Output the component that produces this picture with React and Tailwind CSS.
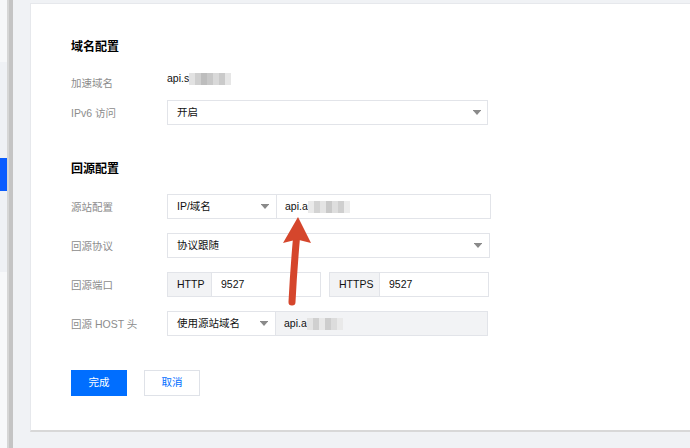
import React from "react";

const font = {
  fontFamily: '"Liberation Sans", "Noto Sans CJK SC", sans-serif',
};

function Caret() {
  return (
    <svg width="8" height="5" viewBox="0 0 8 5" className="shrink-0">
      <rect x="0" y="0" width="8" height="1" fill="#8a8a8a" />
      <polygon points="0.5,1 7.5,1 4,5" fill="#8a8a8a" />
    </svg>
  );
}

// pixelated masked text tail
function Mosaic({ shades }) {
  return (
    <span className="inline-flex h-[12px] blur-[0.6px]">
      {shades.map((c, i) => (
        <span key={i} className="w-[6px] h-full" style={{ backgroundColor: c }} />
      ))}
    </span>
  );
}

function Label({ children }) {
  return (
    <div className="w-[96px] shrink-0 text-[10.5px] leading-[14px] text-[#8c8c8c]">
      {children}
    </div>
  );
}

function Row({ label, children, className = "" }) {
  return (
    <div className={"flex items-center h-[25px] " + className}>
      <Label>{label}</Label>
      {children}
    </div>
  );
}

export default function App() {
  return (
    <div
      className="relative w-[690px] h-[448px] flex bg-[#f0f2f5] overflow-hidden text-[#111]"
      style={font}
    >
      {/* side nav sliver */}
      <div className="w-[7px] flex flex-col shrink-0">
        <div className="h-[62px] bg-[#f6f7f9]" />
        <div className="h-[96px] bg-[#eff1f5]" />
        <div className="h-[33px] bg-[#0a5cff]" />
        <div className="h-[81px] bg-[#eff1f5]" />
        <div className="flex-1 bg-[#f7f8fa]" />
      </div>
      {/* scrollbar */}
      <div className="w-[6px] shrink-0 bg-[#c4c4c4] border-l-2 border-[#d6d6d6]" />

      <div className="flex-1 pl-[17px] pt-[3px] overflow-hidden">
        <div className="w-[700px] h-[429px] bg-white border border-[#e6e8ec] border-b-2 border-b-[#d8d8d8] pl-[40px] pt-[35px] flex flex-col">
          <div className="text-[12px] leading-[16px] font-bold text-black">域名配置</div>

          <div className="flex items-start h-[24px] mt-[16px]">
            <div className="w-[96px] shrink-0 text-[10.5px] leading-[14px] text-[#8c8c8c] pt-[5px]">加速域名</div>
            <div className="flex items-center h-[16px] text-[10.5px] text-[#111]">
              <span>api.s</span>
              <Mosaic shades={["#e2e2e2", "#cfcfcf", "#bdbdbd", "#c8c8c8", "#d9d9d9", "#cacaca", "#e6e6e6"]} />
            </div>
          </div>

          <Row label="IPv6 访问" className="mt-[5px] h-[24px]">
            <div className="w-[321px] h-full border border-[#e2e4e9] flex items-center justify-between pl-[9px] pr-[6px] text-[10.5px]">
              <span>开启</span>
              <Caret />
            </div>
          </Row>

          <div className="mt-[36px] text-[12px] leading-[16px] font-bold text-black">回源配置</div>

          <Row label="源站配置" className="mt-[17px]">
            <div className="w-[110px] h-full border border-[#e2e4e9] flex items-center justify-between pl-[9px] pr-[7px] text-[10.5px]">
              <span>IP/域名</span>
              <Caret />
            </div>
            <div className="w-[214px] h-full border border-l-0 border-[#e2e4e9] flex items-center pl-[8px] text-[10.5px]">
              <span>api.a</span>
              <Mosaic shades={["#eaeaea", "#d3d3d3", "#e4e4e4", "#c9c9c9", "#dedede", "#cfcfcf", "#ececec"]} />
            </div>
          </Row>

          <Row label="回源协议" className="mt-[14px]">
            <div className="w-[323px] h-full border border-[#e2e4e9] flex items-center justify-between pl-[9px] pr-[7px] text-[10.5px]">
              <span>协议跟随</span>
              <Caret />
            </div>
          </Row>

          <Row label="回源端口" className="mt-[14px]">
            <div className="w-[45px] h-full border border-[#e2e4e9] bg-[#f2f3f5] flex items-center pl-[9px] text-[10.5px]">
              HTTP
            </div>
            <div className="w-[109px] h-full border border-l-0 border-[#e2e4e9] flex items-center pl-[9px] text-[10.5px]">
              9527
            </div>
            <div className="w-[8px]" />
            <div className="w-[51px] h-full border border-[#e2e4e9] bg-[#f2f3f5] flex items-center pl-[9px] text-[10.5px]">
              HTTPS
            </div>
            <div className="w-[109px] h-full border border-l-0 border-[#e2e4e9] flex items-center pl-[9px] text-[10.5px]">
              9527
            </div>
          </Row>

          <Row label="回源 HOST 头" className="mt-[14px]">
            <div className="w-[109px] h-full border border-[#e2e4e9] flex items-center justify-between pl-[9px] pr-[7px] text-[10.5px]">
              <span>使用源站域名</span>
              <Caret />
            </div>
            <div className="w-[212px] h-full border border-l-0 border-[#e2e4e9] bg-[#f2f3f5] flex items-center pl-[8px] text-[10.5px]">
              <span>api.a</span>
              <Mosaic shades={["#e4e4e4", "#d0d0d0", "#e8e8e8", "#cdcdcd", "#dcdcdc", "#e9e9e9"]} />
            </div>
          </Row>

          <div className="mt-[34px] flex gap-[17px]">
            <button className="w-[56px] h-[26px] bg-[#006eff] text-white text-[10.5px]">完成</button>
            <button className="w-[56px] h-[26px] bg-white border border-[#dfe2e8] text-[#006eff] text-[10.5px]">取消</button>
          </div>
        </div>
      </div>

      {/* annotation arrow */}
      <svg
        className="absolute left-0 top-0 pointer-events-none"
        width="690"
        height="448"
        viewBox="0 0 690 448"
      >
        <path
          d="M292 302 Q293.5 272 296.5 238"
          stroke="#d5462c"
          strokeWidth="7"
          strokeLinecap="round"
          fill="none"
        />
        <polygon points="298,217 283,243 297,239.5 311,243" fill="#d5462c" />
      </svg>
    </div>
  );
}
